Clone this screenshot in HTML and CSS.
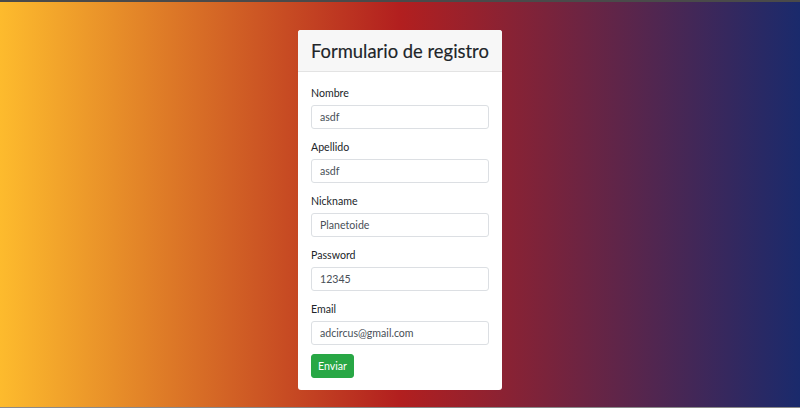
FILE: index.html
```html
<!DOCTYPE html>
<html lang="es">
<head>
<meta charset="utf-8">
<title>Formulario de registro</title>
<link rel="stylesheet" href="styles.css">
</head>
<body>
<div class="topbar"></div>
<main class="stage">
  <div class="card">
    <div class="card-header"><h3 class="title">Formulario de registro</h3></div>
    <form class="card-body">
      <div class="group"><label>Nombre</label><div class="input">asdf</div></div>
      <div class="group"><label>Apellido</label><div class="input">asdf</div></div>
      <div class="group"><label>Nickname</label><div class="input">Planetoide</div></div>
      <div class="group"><label>Password</label><div class="input">12345</div></div>
      <div class="group"><label>Email</label><div class="input">adcircus@gmail.com</div></div>
      <button type="button" class="btn">Enviar</button>
    </form>
  </div>
</main>
<div class="bottombar"></div>
</body>
</html>
```
FILE: styles.css
```css
* { box-sizing: border-box; }
html, body { margin: 0; padding: 0; height: 408px; overflow: hidden; }
body {
  font-family: Lato, "Open Sans", sans-serif;
  display: flex;
  flex-direction: column;
}
.topbar { height: 2px; background: #4a4a4a; flex: none; }
.bottombar { height: 1px; background: #8a8a8a; flex: none; }
.stage {
  flex: 1;
  background: linear-gradient(to right, #fdbb2d, #b21f1f, #1a2a6c);
  display: flex;
  justify-content: center;
  align-items: flex-start;
  padding-top: 28px;
}
.card {
  width: 204px;
  background: #fff;
  border-radius: 3px;
  overflow: hidden;
}
.card-header {
  height: 42px;
  background: #f7f7f7;
  border-bottom: 1px solid #e3e3e3;
  padding: 0 13px;
  display: flex;
  align-items: center;
}
.title {
  margin: 0;
  font-size: 18.4px;
  font-weight: 400;
  color: #212529;
  white-space: nowrap;
  -webkit-text-stroke: 0.15px #212529;
}
.card-body {
  padding: 13px 13px 12px;
  display: flex;
  flex-direction: column;
}
.group { display: flex; flex-direction: column; margin-bottom: 10px; }
label {
  font-size: 10.6px;
  line-height: 16px;
  color: #212529;
  margin-bottom: 4px;
}
.input {
  height: 24px;
  border: 1px solid #dcdfe3;
  border-radius: 3px;
  padding: 0 8px;
  font-size: 10.6px;
  line-height: 22px;
  color: #495057;
}
.btn {
  align-self: flex-start;
  height: 24px;
  margin-top: -1px;
  padding: 0 6px;
  background: #28a745;
  border: 1px solid #28a745;
  border-radius: 3px;
  color: #fff;
  font-family: inherit;
  font-size: 10.6px;
}
```
